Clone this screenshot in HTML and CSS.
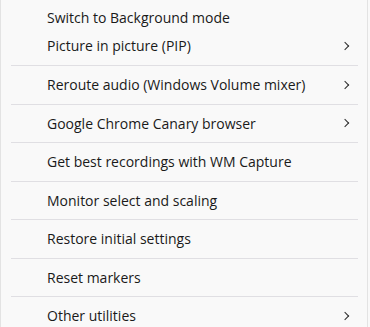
FILE: index.html
```html
<!DOCTYPE html>
<html lang="en">
<head>
    <meta charset="UTF-8">
    <title>Menu</title>
    <link rel="stylesheet" href="styles.css">
</head>
<body>
<div class="menu">
    <div class="item item-top">Switch to Background mode</div>
    <div class="item item-top sub">Picture in picture (PIP)</div>
    <div class="sep sep-first"></div>
    <div class="item sub">Reroute audio (Windows Volume mixer)</div>
    <div class="sep"></div>
    <div class="item sub">Google Chrome Canary browser</div>
    <div class="sep"></div>
    <div class="item">Get best recordings with WM Capture</div>
    <div class="sep"></div>
    <div class="item">Monitor select and scaling</div>
    <div class="sep"></div>
    <div class="item">Restore initial settings</div>
    <div class="sep"></div>
    <div class="item">Reset markers</div>
    <div class="sep"></div>
    <div class="item sub">Other utilities</div>
</div>
</body>
</html>
```

FILE: styles.css
```css
body {
    margin: 0;
    background: #f9f9f9;
    font-family: "Open Sans", "Noto Sans", sans-serif;
    overflow: hidden;
    height: 327px;
}
.menu {
    width: 368px;
    height: 327px;
    border-left: 1px solid #e3e3e3;
    border-right: 1px solid #e3e3e3;
    padding-top: 4px;
    box-sizing: border-box;
}
.item {
    height: 37.5px;
    line-height: 37.5px;
    padding-left: 46px;
    padding-right: 18px;
    font-size: 14px;
    color: #1a1a1a;
    position: relative;
}
.item-top {
    height: 28px;
    line-height: 28px;
}
.sub::after {
    content: "";
    position: absolute;
    right: 19px;
    top: 50%;
    width: 5px;
    height: 5px;
    border-top: 1.4px solid #2a2a2a;
    border-right: 1.4px solid #2a2a2a;
    transform: translateY(-50%) rotate(45deg);
}
.sep {
    height: 1px;
    margin: 0 9px 0 10px;
    background: #e0dfe3;
}
.sep-first {
    margin-top: 5px;
}
```
